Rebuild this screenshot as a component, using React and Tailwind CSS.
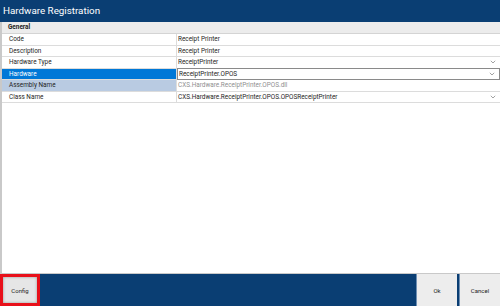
const ROWS = [
  { label: 'Code', value: 'Receipt Printer' },
  { label: 'Description', value: 'Receipt Printer' },
  { label: 'Hardware Type', value: 'ReceiptPrinter', drop: true },
  { label: 'Hardware', value: 'ReceiptPrinter.OPOS', drop: true, selected: true },
  { label: 'Assembly Name', value: 'CXS.Hardware.ReceiptPrinter.OPOS.dll', readOnly: true },
  { label: 'Class Name', value: 'CXS.Hardware.ReceiptPrinter.OPOS.OPOSReceiptPrinter', drop: true },
]

function Chevron() {
  return (
    <svg width="6" height="4" viewBox="0 0 6 4" className="shrink-0">
      <path d="M0.8 0.8 L3 3 L5.2 0.8" fill="none" stroke="#8a8a8a" strokeWidth="0.8" />
    </svg>
  )
}

function Row({ label, value, drop, selected, readOnly }) {
  const labelBg = selected ? 'bg-[#0078d7] text-white' : readOnly ? 'bg-[#b9cbe2] text-[#1e1e1e]' : 'bg-white text-[#1e1e1e]'
  return (
    <div className="flex h-[11.5px] border-b border-[#dcdcdc]">
      <div className={`w-[175px] shrink-0 pl-[7px] flex items-center border-r border-[#dcdcdc] ${labelBg}`}>
        {label}
      </div>
      <div
        className={[
          'flex-1 flex items-center pl-[1px] pr-[4px]',
          selected ? 'border border-[#8a8a8a] -my-px' : '',
          readOnly ? 'text-[#8f8f8f]' : 'text-[#1e1e1e]',
        ].join(' ')}
      >
        <span className="flex-1">{value}</span>
        {drop && <Chevron />}
      </div>
    </div>
  )
}

export default function App() {
  return (
    <div className="w-[500px] h-[306px] flex flex-col bg-white overflow-hidden" style={{ fontFamily: 'Roboto, "Noto Sans", sans-serif' }}>
      {/* title bar */}
      <div className="h-[22px] shrink-0 bg-[#0a3e73] flex items-center pl-[3px]">
        <span className="text-white text-[9.8px] leading-none">Hardware Registration</span>
      </div>

      {/* property grid */}
      <div className="flex-1 flex flex-col border-l-2 border-[#c9c9c9] text-[6.4px] leading-none">
        <div className="h-[12px] bg-[#ececec] border-b border-[#d4d4d4] flex items-center pl-[6px] font-bold text-[#1e1e1e]">
          General
        </div>
        {ROWS.map(r => <Row key={r.label} {...r} />)}
      </div>

      {/* footer */}
      <div className="h-[33px] shrink-0 bg-[#0a3e73] border-t border-[#c9c9c9] flex items-stretch text-[6px] text-[#1e1e1e]">
        <div className="w-[40px] border-[3px] border-[#e8101a] flex">
          <button className="flex-1 bg-[#e6e6e6] shadow-[inset_0_0_3px_rgba(0,0,0,0.35)] flex items-center justify-center">
            Config
          </button>
        </div>
        <div className="flex-1" />
        <button className="w-[41px] bg-[#ededed] border-l border-[#6f8fb3] flex items-center justify-center">Ok</button>
        <div className="w-[2px] bg-[#0a3e73]" />
        <button className="w-[41px] bg-[#ededed] border-l border-[#6f8fb3] flex items-center justify-center">Cancel</button>
      </div>
    </div>
  )
}
